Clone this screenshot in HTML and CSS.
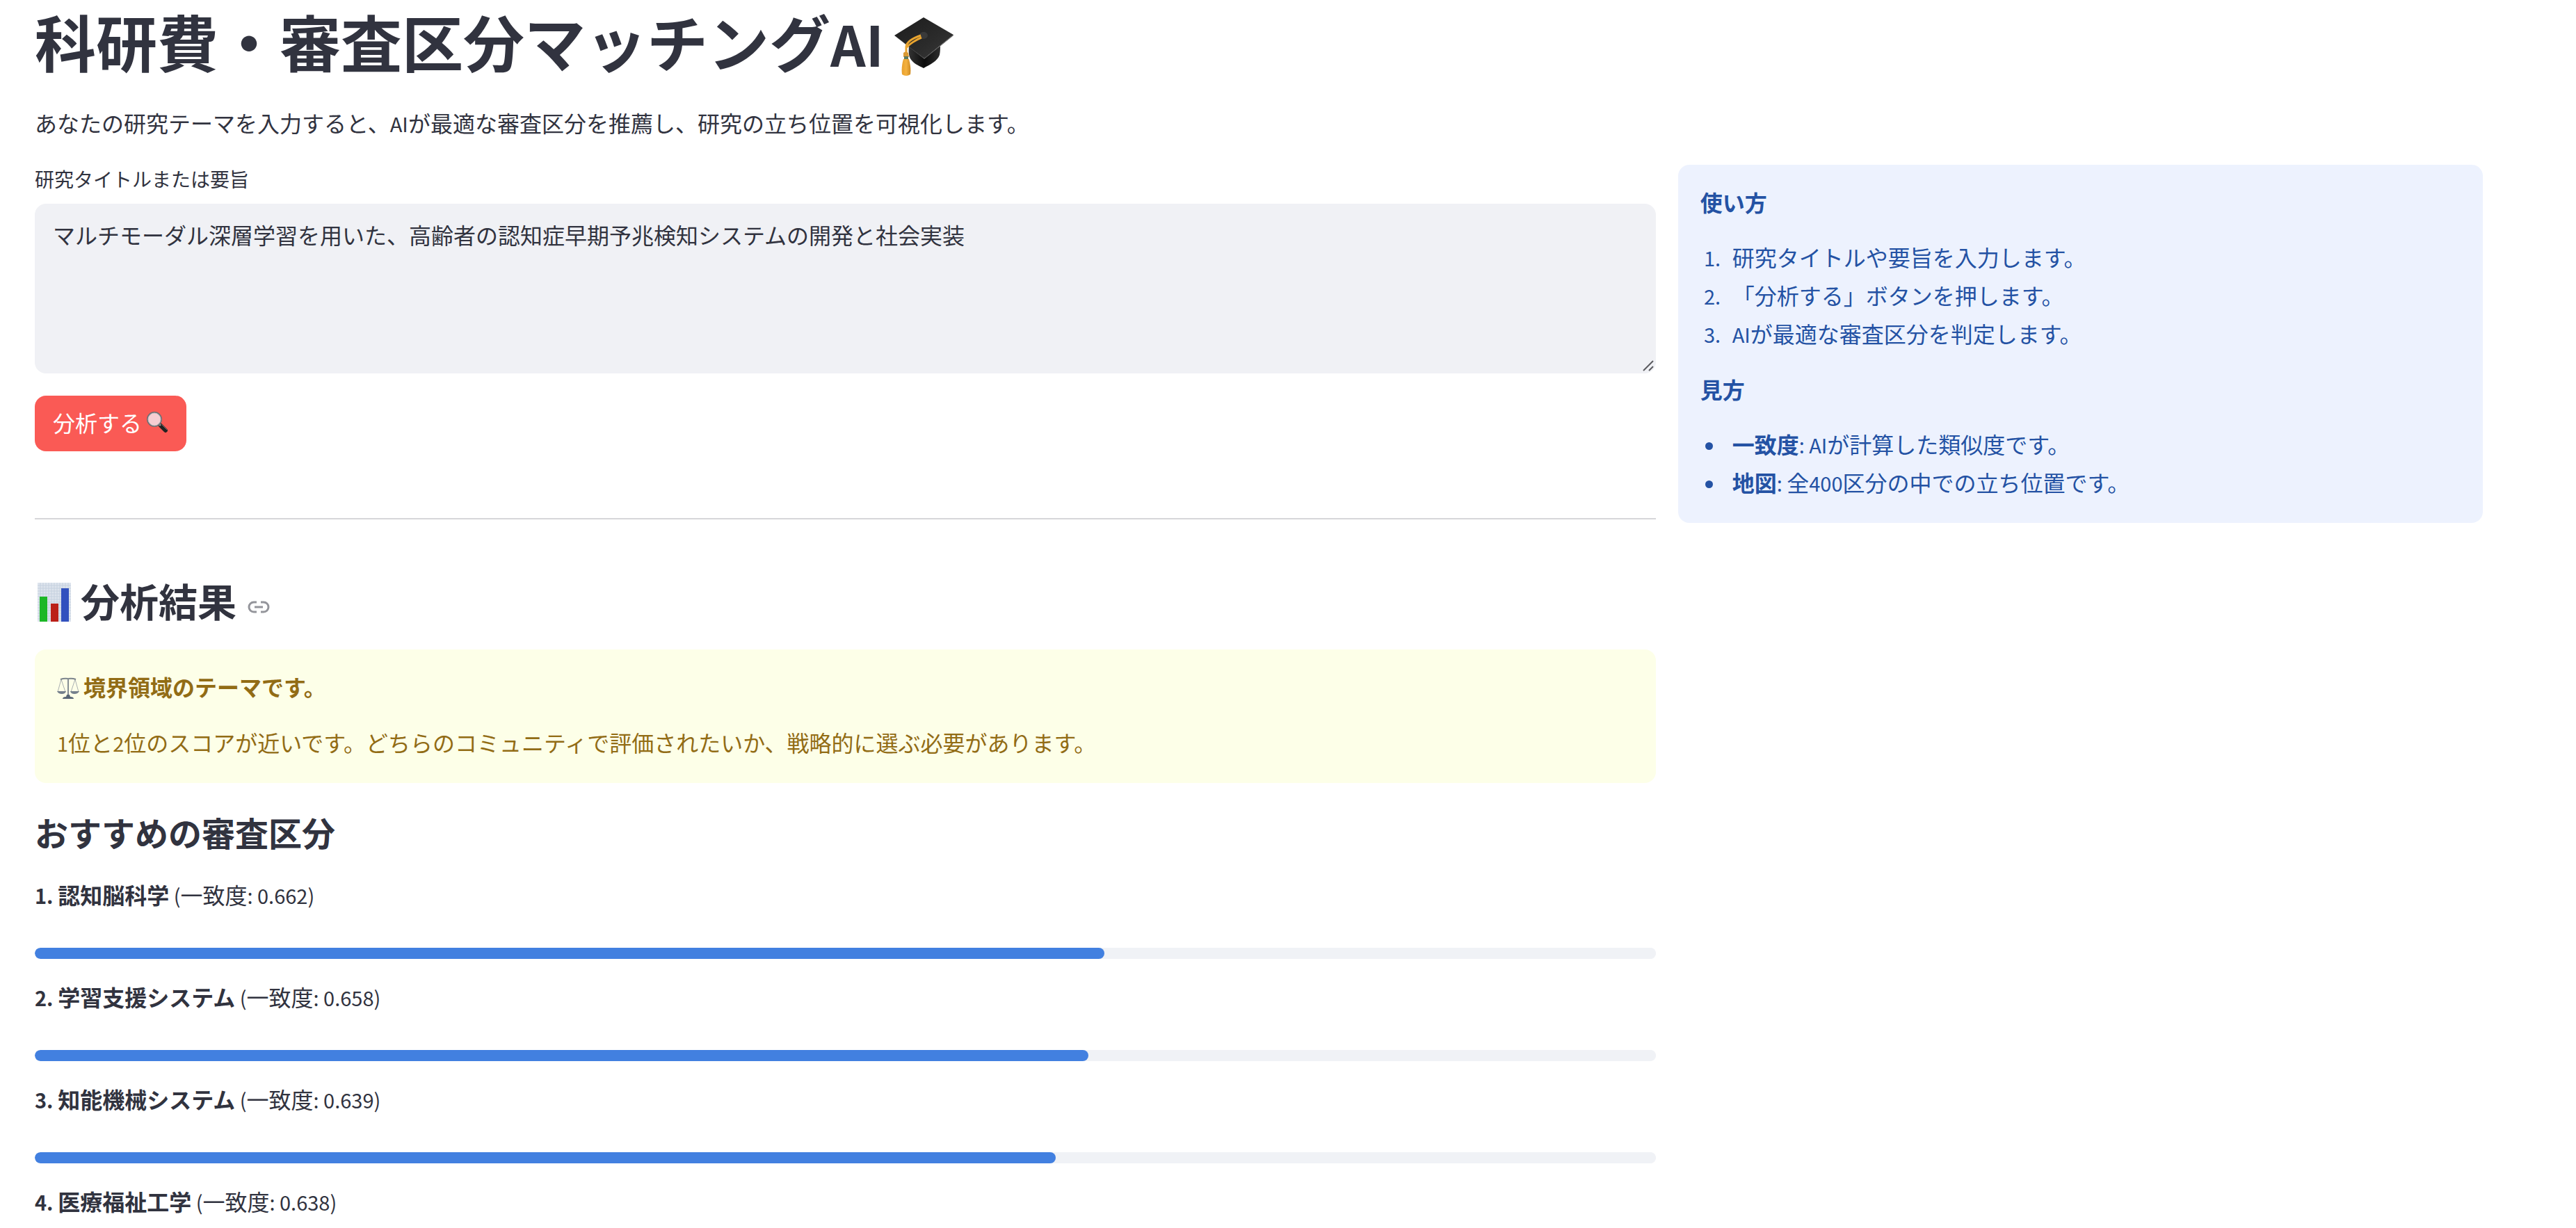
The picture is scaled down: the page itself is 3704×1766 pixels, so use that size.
FILE: index.html
```html
<!DOCTYPE html>
<html lang="ja">
<head>
<meta charset="utf-8">
<title>科研費・審査区分マッチングAI</title>
<link rel="stylesheet" href="styles.css">
</head>
<body>
<main class="page">
  <h1 class="title">科研費・審査区分マッチング<span class="latin">AI</span><svg class="icon-title" viewBox="0 0 88 88" aria-hidden="true">
    <defs>
      <linearGradient id="board" x1="0" y1="0" x2="1" y2="1"><stop offset="0" stop-color="#1c1c1c"/><stop offset=".6" stop-color="#2b2b2b"/><stop offset="1" stop-color="#3a3a3a"/></linearGradient>
      <linearGradient id="cap" x1="0" y1="0" x2="1" y2="0"><stop offset="0" stop-color="#333"/><stop offset=".5" stop-color="#0c0c0c"/><stop offset="1" stop-color="#2e2e2e"/></linearGradient>
      <linearGradient id="tassel" x1="0" y1="0" x2="1" y2="0"><stop offset="0" stop-color="#e8a02c"/><stop offset=".5" stop-color="#f4b240"/><stop offset="1" stop-color="#cf8a20"/></linearGradient>
    </defs>
    <path d="M24 44c-1 10 0 17 4 21 4 5 11 8 17 11 9-5 20-10 23-19 1-5 1-10 1-13L46 62z" fill="url(#cap)"/>
    <path d="M45 3 88 28 46 62 3 29z" fill="url(#board)"/>
    <path d="M3 29 46 62 88 28v1L46 63z" fill="#555"/>
    <ellipse cx="45" cy="29" rx="6" ry="5" fill="#3a3a3a"/>
    <path d="M41 29C32 32 21 37 20 45v10M42 32C34 35 24 42 21 46" fill="none" stroke="#eaa530" stroke-width="3"/>
    <path d="M16 54q3-3 7 0l1 6h-8z" fill="#d99a35"/>
    <path d="M17 59h6v4h-6z" fill="#5e7a5c"/>
    <path d="M16 63h8c2 8 3 15 2 22q-6 4-12 0c-1-8 0-15 2-22z" fill="url(#tassel)"/>
  </svg></h1>
  <p class="lead">あなたの研究テーマを入力すると、<span class="latin">AI</span>が最適な審査区分を推薦し、研究の立ち位置を可視化します。</p>

  <div class="columns">
    <div class="main-col">
      <form class="theme-form">
        <label class="field-label" for="theme">研究タイトルまたは要旨</label>
        <div class="field">
          <textarea class="theme-input" id="theme">マルチモーダル深層学習を用いた、高齢者の認知症早期予兆検知システムの開発と社会実装</textarea>
          <svg class="grip" viewBox="0 0 16 16" aria-hidden="true"><path d="M1 15 15 1M9 15l6-6"/></svg>
        </div>
        <button class="submit" type="button">分析する<svg class="icon-text" viewBox="0 0 32 32" aria-hidden="true">
          <path d="m21 21 7 7" stroke="#222" stroke-width="6" stroke-linecap="round"/>
          <path d="m23 20 7 7" stroke="#707070" stroke-width="1" stroke-linecap="round"/>
          <path d="m18 18 3 3" stroke="#8b8b8b" stroke-width="3"/>
          <circle cx="12" cy="12" r="10" fill="#f6cdd2" stroke="#6f6f74" stroke-width="2"/>
          <circle cx="12" cy="12" r="9" fill="none" stroke="#c6c2c6" stroke-width="1"/>
        </svg></button>
      </form>
      <hr class="divider">

      <section id="result">
        <h2 class="result-title"><svg class="icon-chart" viewBox="0 0 48 56" aria-hidden="true">
          <path d="M0 0h48v56H0z" fill="#dde4ed"/>
          <path d="M4 0v56M8 0v56M12 0v56M16 0v56M20 0v56M24 0v56M28 0v56M32 0v56M36 0v56M40 0v56M44 0v56M0 4h48M0 8h48M0 12h48M0 16h48M0 20h48M0 24h48M0 28h48M0 32h48M0 36h48M0 40h48M0 44h48M0 48h48M0 52h48" stroke="#c6d1df" stroke-width="1"/>
          <path d="M3 20h11v36H3z" fill="#1cb726"/>
          <path d="M19 30h11v26H19z" fill="#bb2018"/>
          <path d="M34 8h11v48H34z" fill="#3251be"/>
        </svg>分析結果<a class="anchor" href="#result" aria-label="分析結果へのリンク"><svg viewBox="0 0 32 18" aria-hidden="true"><path d="M13 2H9a7 7 0 0 0 0 14H13M19 2h4a7 7 0 0 1 0 14H19M10 9h12"/></svg></a></h2>

        <div class="notice">
          <p><svg class="icon-scale" viewBox="0 0 32 32" aria-hidden="true">
            <path d="M6 3 1 21M6 3l6 18M26 3l-6 18M26 3l5 18" fill="none" stroke="#aab0b2" stroke-width="1"/>
            <path d="M5 3q5-2 11-1 6-1 11 1" fill="none" stroke="#7c858c" stroke-width="2"/>
            <path d="M15 1h2v26h-2z" fill="#858d94"/>
            <path d="M0 20h13q-1 4-6 4t-7-4zM19 20h13q-2 4-7 4t-6-4z" fill="#75808c"/>
            <path d="M14 25h4l1 3c3 0 5 1 5 3H8c0-2 2-3 5-3z" fill="#596675"/>
          </svg><strong>境界領域のテーマです。</strong></p>
          <p><span class="latin">1</span>位と<span class="latin">2</span>位のスコアが近いです。どちらのコミュニティで評価されたいか、戦略的に選ぶ必要があります。</p>
        </div>

        <h3 class="rank-title">おすすめの審査区分</h3>
        <div class="rank">
          <p id="rank-1"><strong><span class="latin">1. </span>認知脳科学</strong><span class="latin"> (</span>一致度<span class="latin">: 0.662)</span></p>
          <progress class="meter" max="100" value="66" aria-labelledby="rank-1"></progress>
        </div>
        <div class="rank">
          <p id="rank-2"><strong><span class="latin">2. </span>学習支援システム</strong><span class="latin"> (</span>一致度<span class="latin">: 0.658)</span></p>
          <progress class="meter" max="100" value="65" aria-labelledby="rank-2"></progress>
        </div>
        <div class="rank">
          <p id="rank-3"><strong><span class="latin">3. </span>知能機械システム</strong><span class="latin"> (</span>一致度<span class="latin">: 0.639)</span></p>
          <progress class="meter" max="100" value="63" aria-labelledby="rank-3"></progress>
        </div>
        <div class="rank">
          <p><strong><span class="latin">4. </span>医療福祉工学</strong><span class="latin"> (</span>一致度<span class="latin">: 0.638)</span></p>
        </div>
      </section>
    </div>

    <aside class="guide">
      <p><strong>使い方</strong></p>
      <ol>
        <li>研究タイトルや要旨を入力します。</li>
        <li>「分析する」ボタンを押します。</li>
        <li><span class="latin">AI</span>が最適な審査区分を判定します。</li>
      </ol>
      <p><strong>見方</strong></p>
      <ul>
        <li><strong>一致度</strong><span class="latin">: AI</span>が計算した類似度です。</li>
        <li><strong>地図</strong><span class="latin">: </span>全<span class="latin">400</span>区分の中での立ち位置です。</li>
      </ul>
    </aside>
  </div>
</main>
</body>
</html>
```
FILE: styles.css
```css
* { box-sizing: border-box; }

body {
  margin: 0;
  background: #fff;
  color: #31333f;
  font: 32px/52px "Noto Sans CJK JP", sans-serif;
}

h1, h2, h3, p, ol, ul { margin: 0; }

.page { padding: 5px 134px 0 50px; }

/* Latin letters and digits are set a step smaller than the kana and kanji */
.latin { font-size: 29px; line-height: 1; white-space: pre-wrap; }

.title { font-size: 88px; line-height: 106px; font-weight: 700; }
.title .latin { font-size: 79px; }
.icon-title { width: 88px; height: 88px; margin-left: 12px; vertical-align: -14px; }

.lead { margin-top: 39px; }

.columns { display: flex; align-items: flex-start; gap: 32px; margin-top: 35px; }
.main-col { flex: 0 0 calc(66.6667% - 16px); }

.field-label { display: block; font-size: 28px; line-height: 40px; margin-bottom: 16px; }
.field { position: relative; }
.theme-input {
  display: block;
  width: 100%;
  height: 244px;
  padding: 18px 26px;
  border: 0;
  border-radius: 16px;
  background: #f0f1f5;
  color: inherit;
  font: inherit;
  resize: none;
}
.grip {
  position: absolute;
  right: 3px;
  bottom: 3px;
  width: 16px;
  height: 16px;
  fill: none;
  stroke: #5c5c60;
  stroke-width: 2;
}

.submit {
  display: flex;
  align-items: center;
  gap: 6px;
  height: 80px;
  margin-top: 32px;
  padding: 0 26px 5px;
  border: 0;
  border-radius: 16px;
  background: #fa5a55;
  color: #fff;
  font: inherit;
}
.icon-text { width: 32px; height: 32px; fill: none; }

.divider { height: 2px; margin: 96px 0 0; border: 0; background: #d6d6d9; }

.result-title {
  display: flex;
  align-items: center;
  margin-top: 78px;
  padding-left: 4px;
  font-size: 56px;
  line-height: 76px;
}
.icon-chart { width: 48px; height: 56px; margin: 6px 14px 0 0; }
.anchor { display: flex; margin: 20px 0 0 16px; }
.anchor svg { width: 32px; height: 18px; fill: none; stroke: #94959b; stroke-width: 3; }

.notice {
  display: grid;
  gap: 28px;
  margin-top: 33px;
  padding: 27px 32px 33px;
  border-radius: 16px;
  background: #fdffe8;
  color: #926c15;
}
.icon-scale { width: 32px; height: 32px; margin-right: 6px; vertical-align: -5px; }

.rank-title { margin: 38px 0 32px; font-size: 48px; line-height: 64px; }
.rank + .rank { margin-top: 28px; }

.meter {
  display: block;
  width: 100%;
  height: 16px;
  margin-top: 51px;
  border: 0;
  border-radius: 8px;
  background: #f0f2f6;
  overflow: hidden;
  appearance: none;
}
.meter::-webkit-progress-bar { background: #f0f2f6; border-radius: 8px; }
.meter::-webkit-progress-value { background: #4280e0; border-radius: 8px; }

.guide {
  flex: 1;
  padding: 27px 32px 31px;
  border-radius: 16px;
  background: #edf2fe;
  color: #2452a4;
}
.guide ol, .guide ul { margin: 26px 0; padding-left: 36px; line-height: 55px; }
.guide ul { margin-bottom: 0; }
.guide li { padding-left: 10px; }
.guide li::marker { font-size: 29px; }
```
